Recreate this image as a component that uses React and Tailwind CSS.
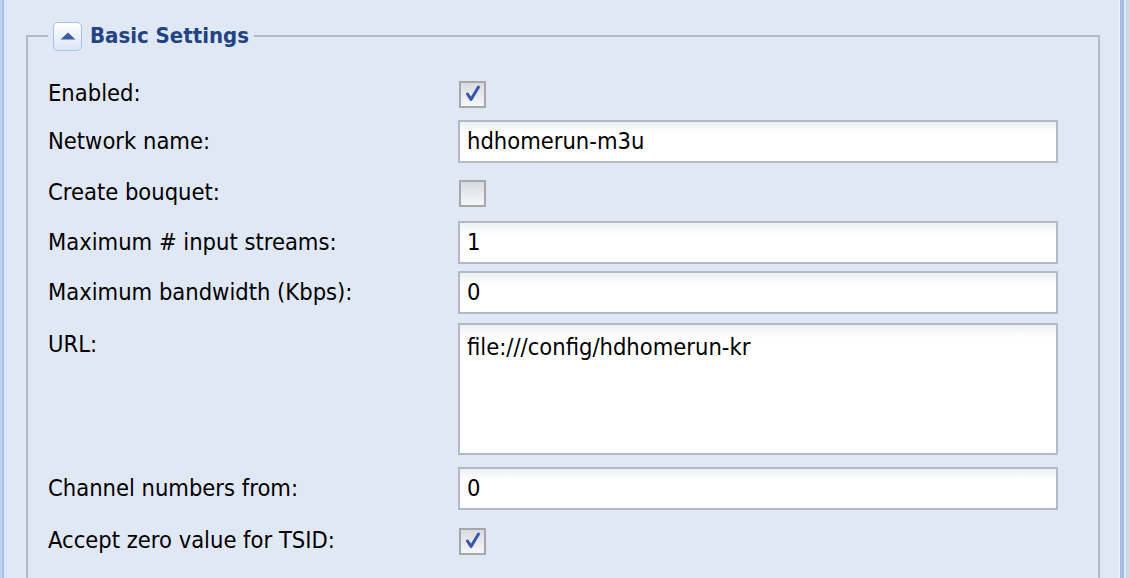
import React from "react";

function CheckBox({ checked }) {
  return (
    <div className="w-[27px] h-[27px] border-2 border-[#a5a7ab] bg-gradient-to-b from-[#d9dbe0] to-[#f6f7f9] flex items-center justify-center">
      {checked && (
        <svg width="20" height="20" viewBox="0 0 20 20">
          <path d="M4.5 10 L8 15.5 L15.5 3" fill="none" stroke="#3a56a6" strokeWidth="3" strokeLinecap="round" strokeLinejoin="round" />
        </svg>
      )}
    </div>
  );
}

function TextInput({ value }) {
  return (
    <div className="w-[600px] h-[43px] border-2 border-[#b5b8c8] bg-gradient-to-b from-[#eef0f0] to-white to-[30%] flex items-center pl-[7px] text-black">
      {value}
    </div>
  );
}

function Row({ label, children, className = "" }) {
  return (
    <div className={"flex items-start " + className}>
      <div className="w-[410px] h-[43px] flex items-center text-black">{label}</div>
      {children}
    </div>
  );
}

function CheckRow({ label, checked, className = "" }) {
  return (
    <div className={"flex items-center h-[44px] " + className}>
      <div className="w-[411px] text-black">{label}</div>
      <CheckBox checked={checked} />
    </div>
  );
}

export default function App() {
  return (
    <div className="flex w-[1130px] h-[578px] overflow-hidden bg-[#e0e7f5] font-['DejaVu_Sans_Condensed','DejaVu_Sans',sans-serif] text-[23.5px]">
      <div className="w-[2px] bg-[#c4d0e7]" />
      <div className="w-[2px] bg-[#a7bfe8]" />
      <div className="w-[3px] bg-[#d8e5fa]" />
      <div className="flex-1 pt-[22px]">
        <fieldset className="ml-[19px] w-[1074px] border-2 border-[#b5b8c8] px-[20px] pt-[22px] pb-[40px]">
          <legend className="px-[5px] h-[28px] flex items-center gap-[8px]">
            <div className="w-[29px] h-[29px] rounded-[5px] border border-[#a9c0e6] bg-gradient-to-b from-white to-[#dbe5f7] flex items-center justify-center">
              <svg width="16" height="8" viewBox="0 0 16 8">
                <path d="M0.5 7.5 L8 0.5 L15.5 7.5 Z" fill="#3b5aa7" />
              </svg>
            </div>
            <span className="font-bold text-[22px] leading-[28px] text-[#234384]">Basic Settings</span>
          </legend>
          <div className="flex flex-col">
            <CheckRow label="Enabled:" checked className="h-[34px]" />
            <Row label="Network name:" className="mt-[4px]">
              <TextInput value="hdhomerun-m3u" />
            </Row>
            <CheckRow label="Create bouquet:" className="mt-[8px]" />
            <Row label="Maximum # input streams:" className="mt-[6px]">
              <TextInput value="1" />
            </Row>
            <Row label="Maximum bandwidth (Kbps):" className="mt-[7px]">
              <TextInput value="0" />
            </Row>
            <Row label="URL:" className="mt-[9px]">
              <div className="w-[600px] h-[132px] border-2 border-[#b5b8c8] bg-gradient-to-b from-[#eef0f0] to-white to-[10%] pl-[7px] pt-[5px] text-black">
                file:///config/hdhomerun-kr
              </div>
            </Row>
            <Row label="Channel numbers from:" className="mt-[12px]">
              <TextInput value="0" />
            </Row>
            <CheckRow label="Accept zero value for TSID:" checked className="mt-[9px]" />
          </div>
        </fieldset>
      </div>
      <div className="w-[1px] bg-[#eef3fb]" />
      <div className="w-[4px] bg-[#a7bde6]" />
      <div className="w-[2px] bg-[#e2e9f6]" />
      <div className="w-[4px] bg-[#cfd8e8]" />
    </div>
  );
}
